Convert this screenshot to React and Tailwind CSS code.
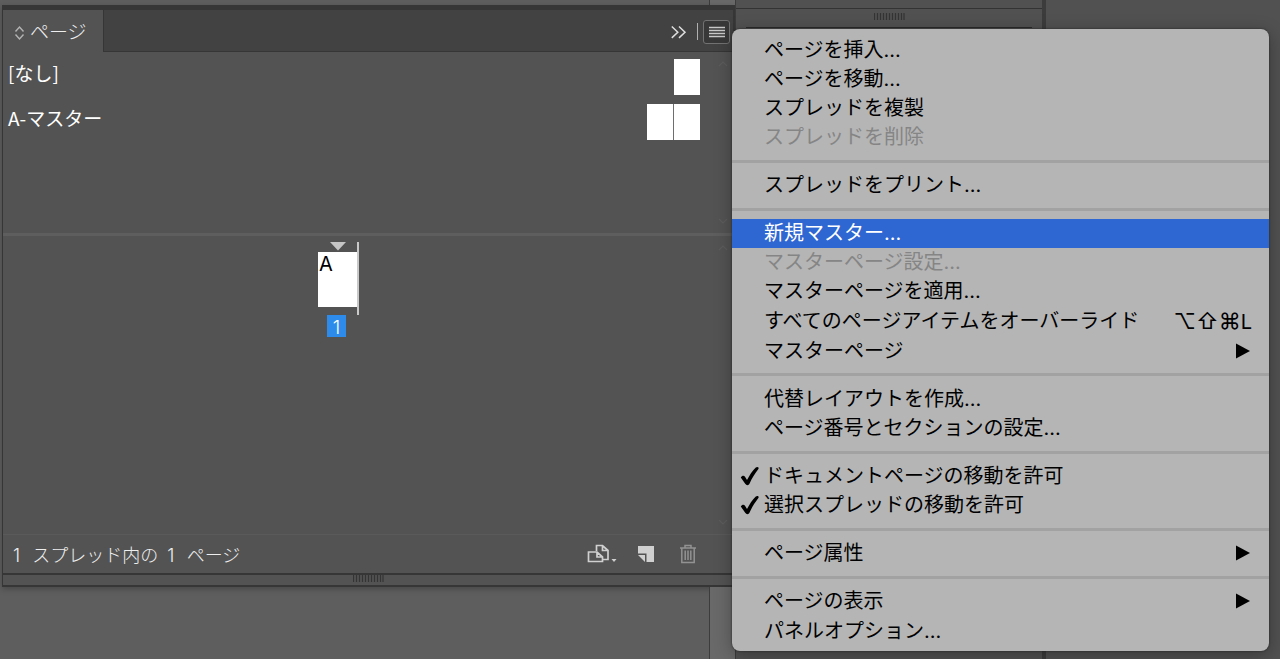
import React from "react";

const MENU = [
  [
    { label: "ページを挿入..." },
    { label: "ページを移動..." },
    { label: "スプレッドを複製" },
    { label: "スプレッドを削除", disabled: true },
  ],
  [{ label: "スプレッドをプリント..." }],
  [
    { label: "新規マスター...", active: true },
    { label: "マスターページ設定...", disabled: true },
    { label: "マスターページを適用..." },
    { label: "すべてのページアイテムをオーバーライド", modifiers: "⌥⇧⌘", letter: "L" },
    { label: "マスターページ", submenu: true },
  ],
  [{ label: "代替レイアウトを作成..." }, { label: "ページ番号とセクションの設定..." }],
  [
    { label: "ドキュメントページの移動を許可", checked: true },
    { label: "選択スプレッドの移動を許可", checked: true },
  ],
  [{ label: "ページ属性", submenu: true }],
  [{ label: "ページの表示", submenu: true }, { label: "パネルオプション..." }],
];

function Grip() {
  return (
    <svg width="31" height="7" viewBox="0 0 31 7" aria-hidden="true" className="block">
      <path
        d="M.5 0v7M3.5 0v7M6.5 0v7M9.5 0v7M12.5 0v7M15.5 0v7M18.5 0v7M21.5 0v7M24.5 0v7M27.5 0v7M30 0v7"
        stroke="#343434"
        strokeWidth="1.2"
      />
    </svg>
  );
}

function ScrollHint({ up }) {
  return (
    <svg width="12" height="8" viewBox="0 0 12 8" fill="none" stroke="#5d5d5d" strokeWidth="1.2" aria-hidden="true">
      <path d={up ? "M2 6l4-4 4 4" : "M2 2l4 4 4-4"} />
    </svg>
  );
}

function MenuItem({ item }) {
  const tone = item.active
    ? "bg-[#2e66d2] text-white"
    : item.disabled
      ? "text-[#858585]"
      : "text-black";
  return (
    <button
      type="button"
      role={item.checked ? "menuitemcheckbox" : "menuitem"}
      aria-checked={item.checked ? true : undefined}
      disabled={item.disabled}
      className={`flex grow items-center pr-[17px] text-left text-xl leading-7 whitespace-nowrap ${tone}`}
    >
      <span className="flex w-8 shrink-0 items-center pl-2">
        {item.checked && (
          <svg width="20" height="20" viewBox="0 0 20 20" aria-hidden="true">
            <path
              d="M.8 11.400C2 9.400 4 9 5 10.800L7 14C9.400 9.400 12.200 4.800 15.800 1.400C17.400.2 19.400 1.200 18.400 3C14.800 7.600 12 12 9.600 17.600C8.600 19.600 6.400 19.600 5.200 17.800Z"
              fill="currentColor"
            />
          </svg>
        )}
      </span>
      <span className="flex-1">{item.label}</span>
      {item.modifiers && (
        <span className="flex items-baseline">
          <span className="text-[22px] leading-7">{item.modifiers}</span>
          <span>{item.letter}</span>
        </span>
      )}
      {item.submenu && (
        <svg width="16" height="16" viewBox="0 0 16 16" aria-hidden="true">
          <path d="M0 .5L14 8L0 15.5Z" fill="currentColor" />
        </svg>
      )}
    </button>
  );
}

function PanelMenu() {
  return (
    <div
      role="menu"
      aria-label="ページパネルメニュー"
      className="absolute top-[29px] right-[11px] -left-[3px] flex min-h-[622px] flex-col overflow-hidden rounded-lg bg-[#b5b5b5] py-[6px] font-['Inter','Noto_Sans_CJK_JP',sans-serif] shadow-[0_0_2px_#202020,0_4px_18px_rgba(0,0,0,0.3)]"
    >
      {MENU.map((group, i) => (
        <React.Fragment key={i}>
          {i > 0 && (
            <div role="separator" className="flex h-[19px] shrink-0 items-center">
              <div className="h-[3px] w-full bg-[#a2a2a2]" />
            </div>
          )}
          {group.map((item) => (
            <MenuItem key={item.label} item={item} />
          ))}
        </React.Fragment>
      ))}
    </div>
  );
}

function PanelHeader() {
  return (
    <header className="flex h-[42px] bg-[#424242]">
      <button
        type="button"
        className="flex w-[101px] items-center gap-1 border-r border-[#363636] bg-[#535353] pl-[10px] text-[19px] leading-7 font-light text-[#eeeeee]"
      >
        <svg width="13" height="16" viewBox="0 0 13 16" fill="none" stroke="#b4b4b4" strokeWidth="1.4" aria-hidden="true" className="mt-1">
          <path d="M2.5 6.5l4-4.5 4 4.5M2.5 9.5l4 4.5 4-4.5" />
        </svg>
        ページ
      </button>
      <div className="flex flex-1 items-center justify-end border-b border-[#363636] pt-[2px] pr-[3px]">
        <button type="button" aria-label="パネルを折りたたむ" className="mr-2">
          <svg width="18" height="16" viewBox="0 0 18 16" fill="none" stroke="#dedede" strokeWidth="1.5" className="block">
            <path d="M.8 2.500l6 5.700-6 5.700M8 2.500l6 5.700-6 5.700" />
          </svg>
        </button>
        <div className="mr-[5px] h-[17px] w-px bg-[#b0b0b0]" />
        <button
          type="button"
          aria-label="パネルメニュー"
          className="flex h-6 w-[27px] items-center justify-center rounded-[3px] border border-[#727272] bg-[#383838]"
        >
          <svg width="16" height="12" viewBox="0 0 16 12" stroke="#c8c8c8" strokeWidth="1.3">
            <path d="M0 1.500h16M0 4.500h16M0 7.500h16M0 10.500h16" />
          </svg>
        </button>
      </div>
    </header>
  );
}

function MasterList() {
  return (
    <section aria-label="マスターページ" className="flex h-[181px] pl-[5px] text-[19px] leading-7 text-white">
      <ul className="flex-1">
        <li className="flex h-[45px] items-start justify-between">
          <span className="pt-[7px]">[なし]</span>
          <span className="mt-[7px] h-9 w-[26px] bg-white" />
        </li>
        <li className="flex h-[45px] items-start justify-between">
          <span className="pt-[7px]">A-マスター</span>
          <span className="mt-[7px] flex gap-px bg-[#6e6e6e]">
            <span className="h-9 w-[26px] bg-white" />
            <span className="h-9 w-[26px] bg-white" />
          </span>
        </li>
      </ul>
      <div className="flex w-[33px] flex-col items-end justify-between py-2 pr-1">
        <ScrollHint up />
        <ScrollHint />
      </div>
    </section>
  );
}

function PageList() {
  return (
    <section aria-label="ドキュメントページ" className="flex flex-1 border-t-[3px] border-[#5e5e5e]">
      <div className="flex flex-1 flex-col items-center pt-[6px] pr-[26px]">
        <div className="flex border-r-2 border-[#c9c9c9] pb-2">
          <div className="flex flex-col items-center">
            <svg width="16" height="10" viewBox="0 0 16 10" aria-hidden="true" className="block">
              <path d="M0 0h16L8 8.500z" fill="#c6c6c6" />
            </svg>
            <div className="h-[55px] w-[39px] bg-white pl-px font-['Inter',sans-serif] text-xl leading-6 text-black">A</div>
          </div>
        </div>
        <div className="mr-1 h-[22px] w-[19px] bg-[#2d8ceb] pt-px text-center font-['Inter',sans-serif] text-[19px] leading-6 font-light text-white">
          1
        </div>
      </div>
      <div className="flex w-[33px] flex-col items-end justify-between py-2 pr-1">
        <ScrollHint up />
        <ScrollHint />
      </div>
    </section>
  );
}

function PanelFooter() {
  return (
    <footer className="flex h-[39px] items-center border-t border-[#5a5a5a] pr-9 pl-[10px] text-[#eeeeee]">
      <p className="flex-1 pt-1 font-['Inter','Noto_Sans_CJK_JP',sans-serif] text-[18px] leading-7 font-light">
        1&ensp;&thinsp;スプレッド内の&ensp;1&ensp;&thinsp;ページ
      </p>
      <div className="flex items-center">
        <button type="button" aria-label="ページサイズを編集" className="mr-5">
          <svg width="30" height="20" viewBox="0 0 30 20" fill="none" stroke="#d0d0d0" strokeWidth="1.7" className="block">
            <path d="M9.500 7V1.500h6l5.500 5V15.500h-5M15.500 1.500v5h5.500" />
            <path d="M1.500 8h8.500l5.500 5v4.500h-14zM10 8v5h5.500" />
            <path d="M24.500 15h5L27 18z" fill="#d0d0d0" stroke="none" />
          </svg>
        </button>
        <button type="button" aria-label="新規ページを作成" className="mr-6">
          <svg width="18" height="18" viewBox="0 0 18 18" fill="#d0d0d0" className="block">
            <path d="M1 1h16v16H9.500V8.500H1z" />
            <path d="M1 10h7v7z" />
          </svg>
        </button>
        <button type="button" aria-label="選択されたページを削除" className="block">
          <svg width="18" height="20" viewBox="0 0 18 20" fill="none" stroke="#929292" strokeWidth="1.500" className="block">
            <path d="M1 4h16M6 4V1.500h6V4M2.800 4v14.500h12.400V4M6.200 6.500v9.500M9 6.500v9.500M11.800 6.500v9.500" />
          </svg>
        </button>
      </div>
    </footer>
  );
}

export default function App() {
  return (
    <div className="flex min-h-screen overflow-hidden bg-[#5e5e5e] font-['Noto_Sans_CJK_JP',sans-serif]">
      <main className="flex flex-1 flex-col">
        <div className="flex h-[5px] justify-end">
          <div className="w-[26px] border-l border-[#3c3c3c] bg-[#696969]" />
        </div>
        <div className="ml-[2px] flex flex-col border-t-[5px] border-r-2 border-b-2 border-l border-[#363636] bg-[#535353] shadow-[0_2px_6px_rgba(0,0,0,0.25)]">
          <PanelHeader />
          <div className="flex min-h-[482px] flex-col">
            <MasterList />
            <PageList />
          </div>
          <PanelFooter />
          <div className="flex h-3 justify-center border-t-2 border-[#363636]">
            <Grip />
          </div>
        </div>
        <div className="flex flex-1 justify-end">
          <div className="w-[26px] border-l border-[#3c3c3c] bg-[#696969]" />
        </div>
      </main>
      <aside className="relative flex w-[545px] shrink-0 bg-[#515151]">
        <div className="flex w-[311px] flex-col border-r-[4px] border-l border-[#3c3c3c]">
          <div className="h-[9px] border-b border-[#333333]" />
          <div className="flex h-[18px] items-start justify-center pt-1">
            <Grip />
          </div>
          <div className="mx-[10px] h-px bg-[#2c2c2c]" />
        </div>
        <PanelMenu />
      </aside>
    </div>
  );
}
